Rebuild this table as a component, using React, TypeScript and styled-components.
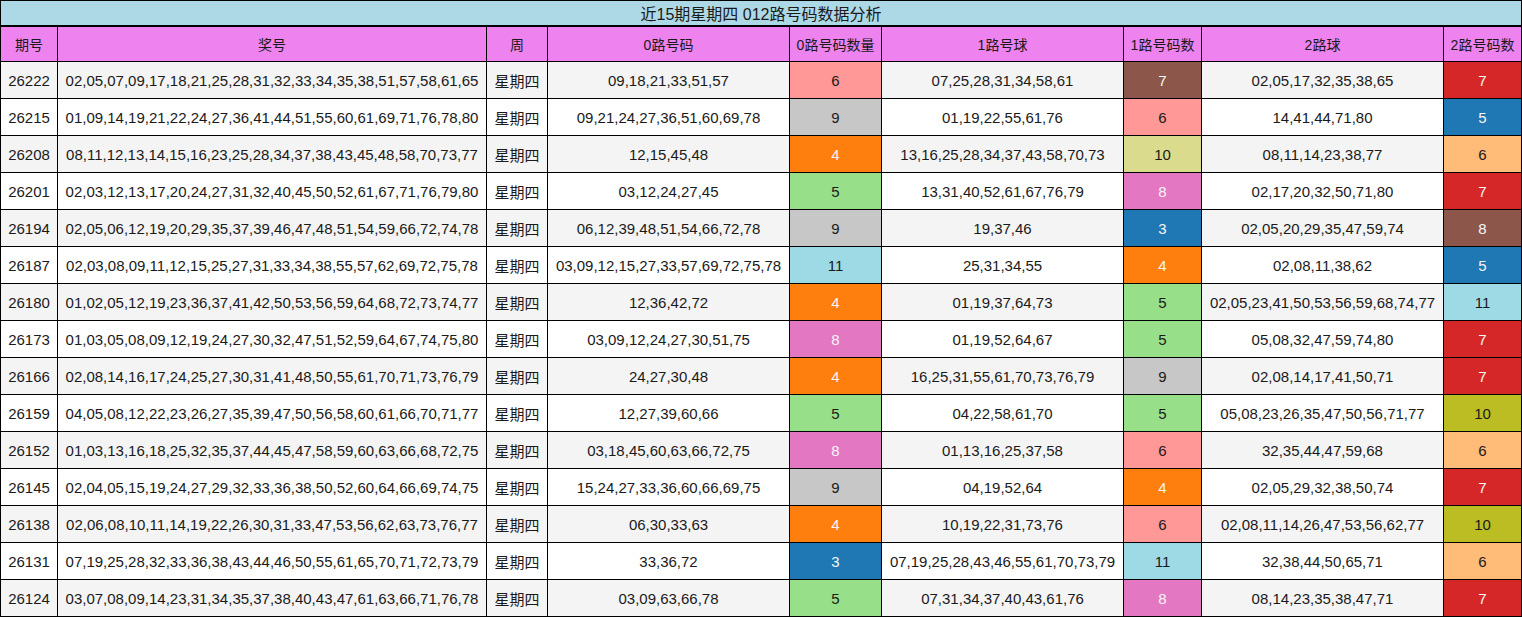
import React from "react";
import styled, { createGlobalStyle } from "styled-components";

const GlobalStyle = createGlobalStyle`
  html, body { margin: 0; padding: 0; background: #ffffff; }
  body {
    font-family: "Liberation Sans", Arial, "Noto Sans CJK SC", sans-serif;
    font-size: 15px;
    color: #1a1a1a;
  }
`;

const Grid = styled.div`
  display: grid;
  grid-template-columns: 57px 429px 61px 242px 92px 242px 78px 242px 78px;
  grid-template-rows: 26px 35px repeat(15, 37px);
  width: 1522px;
  box-sizing: border-box;
  border-left: 1px solid #000;
  border-top: 1px solid #000;
`;

const Title = styled.div`
  grid-column: 1 / -1;
  box-sizing: border-box;
  background: #add8e6;
  border-right: 1px solid #000;
  border-bottom: 2px solid #000;
  display: flex;
  align-items: center;
  justify-content: center;
  font-size: 16px;
  color: #1a1a1a;
`;

const Head = styled.div`
  box-sizing: border-box;
  background: #ee82ee;
  border-right: 1px solid #000;
  border-bottom: 1px solid #000;
  display: flex;
  align-items: center;
  justify-content: center;
  white-space: nowrap;
  font-size: 14px;
  color: #1a1a1a;
`;

const Cell = styled.div<{ $alt: boolean }>`
  box-sizing: border-box;
  background: ${(p) => (p.$alt ? "#f4f4f4" : "#ffffff")};
  border-right: 1px solid #000;
  border-bottom: 1px solid #000;
  display: flex;
  align-items: center;
  justify-content: center;
  white-space: nowrap;
  color: #1a1a1a;
`;

const CountCell = styled.div<{ $bg: string; $light: boolean }>`
  box-sizing: border-box;
  background: ${(p) => p.$bg};
  border-right: 1px solid #000;
  border-bottom: 1px solid #000;
  display: flex;
  align-items: center;
  justify-content: center;
  color: ${(p) => (p.$light ? "#f6f6f6" : "#1a1a1a")};
`;

type Row = [string, string, string, number, string, number, string, number];

const rows: Row[] = [
  ["26222", "02,05,07,09,17,18,21,25,28,31,32,33,34,35,38,51,57,58,61,65", "09,18,21,33,51,57", 6, "07,25,28,31,34,58,61", 7, "02,05,17,32,35,38,65", 7],
  ["26215", "01,09,14,19,21,22,24,27,36,41,44,51,55,60,61,69,71,76,78,80", "09,21,24,27,36,51,60,69,78", 9, "01,19,22,55,61,76", 6, "14,41,44,71,80", 5],
  ["26208", "08,11,12,13,14,15,16,23,25,28,34,37,38,43,45,48,58,70,73,77", "12,15,45,48", 4, "13,16,25,28,34,37,43,58,70,73", 10, "08,11,14,23,38,77", 6],
  ["26201", "02,03,12,13,17,20,24,27,31,32,40,45,50,52,61,67,71,76,79,80", "03,12,24,27,45", 5, "13,31,40,52,61,67,76,79", 8, "02,17,20,32,50,71,80", 7],
  ["26194", "02,05,06,12,19,20,29,35,37,39,46,47,48,51,54,59,66,72,74,78", "06,12,39,48,51,54,66,72,78", 9, "19,37,46", 3, "02,05,20,29,35,47,59,74", 8],
  ["26187", "02,03,08,09,11,12,15,25,27,31,33,34,38,55,57,62,69,72,75,78", "03,09,12,15,27,33,57,69,72,75,78", 11, "25,31,34,55", 4, "02,08,11,38,62", 5],
  ["26180", "01,02,05,12,19,23,36,37,41,42,50,53,56,59,64,68,72,73,74,77", "12,36,42,72", 4, "01,19,37,64,73", 5, "02,05,23,41,50,53,56,59,68,74,77", 11],
  ["26173", "01,03,05,08,09,12,19,24,27,30,32,47,51,52,59,64,67,74,75,80", "03,09,12,24,27,30,51,75", 8, "01,19,52,64,67", 5, "05,08,32,47,59,74,80", 7],
  ["26166", "02,08,14,16,17,24,25,27,30,31,41,48,50,55,61,70,71,73,76,79", "24,27,30,48", 4, "16,25,31,55,61,70,73,76,79", 9, "02,08,14,17,41,50,71", 7],
  ["26159", "04,05,08,12,22,23,26,27,35,39,47,50,56,58,60,61,66,70,71,77", "12,27,39,60,66", 5, "04,22,58,61,70", 5, "05,08,23,26,35,47,50,56,71,77", 10],
  ["26152", "01,03,13,16,18,25,32,35,37,44,45,47,58,59,60,63,66,68,72,75", "03,18,45,60,63,66,72,75", 8, "01,13,16,25,37,58", 6, "32,35,44,47,59,68", 6],
  ["26145", "02,04,05,15,19,24,27,29,32,33,36,38,50,52,60,64,66,69,74,75", "15,24,27,33,36,60,66,69,75", 9, "04,19,52,64", 4, "02,05,29,32,38,50,74", 7],
  ["26138", "02,06,08,10,11,14,19,22,26,30,31,33,47,53,56,62,63,73,76,77", "06,30,33,63", 4, "10,19,22,31,73,76", 6, "02,08,11,14,26,47,53,56,62,77", 10],
  ["26131", "07,19,25,28,32,33,36,38,43,44,46,50,55,61,65,70,71,72,73,79", "33,36,72", 3, "07,19,25,28,43,46,55,61,70,73,79", 11, "32,38,44,50,65,71", 6],
  ["26124", "03,07,08,09,14,23,31,34,35,37,38,40,43,47,61,63,66,71,76,78", "03,09,63,66,78", 5, "07,31,34,37,40,43,61,76", 8, "08,14,23,35,38,47,71", 7],
];

const map01: Record<number, string> = {
  3: "#1f77b4",
  4: "#ff7f0e",
  5: "#98df8a",
  6: "#ff9896",
  7: "#8c564b",
  8: "#e377c2",
  9: "#c7c7c7",
  10: "#dbdb8d",
  11: "#9edae5",
};

const map2: Record<number, string> = {
  5: "#1f77b4",
  6: "#ffbb78",
  7: "#d62728",
  8: "#8c564b",
  10: "#bcbd22",
  11: "#9edae5",
};

const darkBgs = new Set(["#1f77b4", "#ff7f0e", "#8c564b", "#e377c2", "#d62728"]);

const Count: React.FC<{ value: number; map: Record<number, string> }> = ({ value, map }) => {
  const bg = map[value] ?? "#ffffff";
  return (
    <CountCell $bg={bg} $light={darkBgs.has(bg)}>
      {value}
    </CountCell>
  );
};

const headers = ["期号", "奖号", "周", "0路号码", "0路号码数量", "1路号球", "1路号码数", "2路球", "2路号码数"];

export default function App() {
  return (
    <>
      <GlobalStyle />
      <Grid>
        <Title>近15期星期四 012路号码数据分析</Title>
        {headers.map((h) => (
          <Head key={h}>{h}</Head>
        ))}
        {rows.map((r, i) => {
          const alt = i % 2 === 0;
          return (
            <React.Fragment key={r[0]}>
              <Cell $alt={alt}>{r[0]}</Cell>
              <Cell $alt={alt}>{r[1]}</Cell>
              <Cell $alt={alt}>星期四</Cell>
              <Cell $alt={alt}>{r[2]}</Cell>
              <Count value={r[3]} map={map01} />
              <Cell $alt={alt}>{r[4]}</Cell>
              <Count value={r[5]} map={map01} />
              <Cell $alt={alt}>{r[6]}</Cell>
              <Count value={r[7]} map={map2} />
            </React.Fragment>
          );
        })}
      </Grid>
    </>
  );
}
